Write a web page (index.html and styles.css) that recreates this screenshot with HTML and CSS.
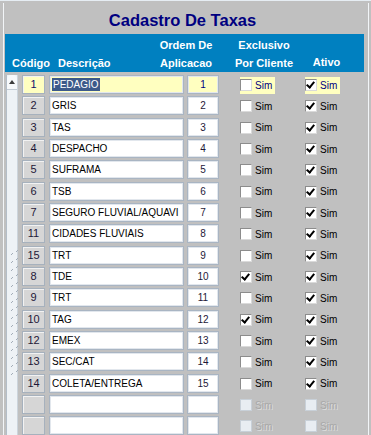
FILE: index.html
```html
<!DOCTYPE html>
<html>
<head>
  <meta charset="utf-8">
  <title>Cadastro De Taxas</title>
  <link rel="stylesheet" href="styles.css">
</head>
<body>
  <div class="frame">
    <div class="panel">
      <h1 class="title">Cadastro De Taxas</h1>

      <div class="head">
        <span class="h-cod">Código</span>
        <span class="h-desc">Descrição</span>
        <span class="h-ord">Ordem De<br>Aplicacao</span>
        <span class="h-exc">Exclusivo<br>Por Cliente</span>
        <span class="h-ativo">Ativo</span>
      </div>

      <div class="grid">
        <div class="scroll">
          <div class="scroll-btn"><i class="arrow"></i></div>
          <div class="grip">
            <svg width="12" height="130">
              <defs>
                <pattern id="dots" width="12" height="8" patternUnits="userSpaceOnUse">
                  <rect x="4" y="6" width="1" height="1" fill="#a3adb8"/>
                  <rect x="5" y="5" width="1" height="1" fill="#a3adb8"/>
                  <rect x="9" y="3" width="1" height="1" fill="#a3adb8"/>
                  <rect x="10" y="2" width="1" height="1" fill="#a3adb8"/>
                </pattern>
              </defs>
              <rect width="12" height="130" fill="url(#dots)"/>
            </svg>
          </div>
        </div>

        <div class="rows">
          <div class="row sel">
            <span class="cod">1</span>
            <span class="desc"><b class="hl">PEDAGIO</b></span>
            <span class="ord">1</span>
            <span class="c1"><span class="chk"><i class="box"></i>Sim</span></span>
            <span class="c2"><span class="chk"><i class="box on"></i>Sim</span></span>
          </div>
          <div class="row">
            <span class="cod">2</span><span class="desc">GRIS</span><span class="ord">2</span>
            <span class="c1"><span class="chk"><i class="box"></i>Sim</span></span>
            <span class="c2"><span class="chk"><i class="box on"></i>Sim</span></span>
          </div>
          <div class="row">
            <span class="cod">3</span><span class="desc">TAS</span><span class="ord">3</span>
            <span class="c1"><span class="chk"><i class="box"></i>Sim</span></span>
            <span class="c2"><span class="chk"><i class="box on"></i>Sim</span></span>
          </div>
          <div class="row">
            <span class="cod">4</span><span class="desc">DESPACHO</span><span class="ord">4</span>
            <span class="c1"><span class="chk"><i class="box"></i>Sim</span></span>
            <span class="c2"><span class="chk"><i class="box on"></i>Sim</span></span>
          </div>
          <div class="row">
            <span class="cod">5</span><span class="desc">SUFRAMA</span><span class="ord">5</span>
            <span class="c1"><span class="chk"><i class="box"></i>Sim</span></span>
            <span class="c2"><span class="chk"><i class="box on"></i>Sim</span></span>
          </div>
          <div class="row">
            <span class="cod">6</span><span class="desc">TSB</span><span class="ord">6</span>
            <span class="c1"><span class="chk"><i class="box"></i>Sim</span></span>
            <span class="c2"><span class="chk"><i class="box on"></i>Sim</span></span>
          </div>
          <div class="row">
            <span class="cod">7</span><span class="desc">SEGURO FLUVIAL/AQUAVI</span><span class="ord">7</span>
            <span class="c1"><span class="chk"><i class="box"></i>Sim</span></span>
            <span class="c2"><span class="chk"><i class="box on"></i>Sim</span></span>
          </div>
          <div class="row">
            <span class="cod">11</span><span class="desc">CIDADES FLUVIAIS</span><span class="ord">8</span>
            <span class="c1"><span class="chk"><i class="box"></i>Sim</span></span>
            <span class="c2"><span class="chk"><i class="box on"></i>Sim</span></span>
          </div>
          <div class="row">
            <span class="cod">15</span><span class="desc">TRT</span><span class="ord">9</span>
            <span class="c1"><span class="chk"><i class="box"></i>Sim</span></span>
            <span class="c2"><span class="chk"><i class="box on"></i>Sim</span></span>
          </div>
          <div class="row">
            <span class="cod">8</span><span class="desc">TDE</span><span class="ord">10</span>
            <span class="c1"><span class="chk"><i class="box on"></i>Sim</span></span>
            <span class="c2"><span class="chk"><i class="box on"></i>Sim</span></span>
          </div>
          <div class="row">
            <span class="cod">9</span><span class="desc">TRT</span><span class="ord">11</span>
            <span class="c1"><span class="chk"><i class="box"></i>Sim</span></span>
            <span class="c2"><span class="chk"><i class="box on"></i>Sim</span></span>
          </div>
          <div class="row">
            <span class="cod">10</span><span class="desc">TAG</span><span class="ord">12</span>
            <span class="c1"><span class="chk"><i class="box on"></i>Sim</span></span>
            <span class="c2"><span class="chk"><i class="box on"></i>Sim</span></span>
          </div>
          <div class="row">
            <span class="cod">12</span><span class="desc">EMEX</span><span class="ord">13</span>
            <span class="c1"><span class="chk"><i class="box"></i>Sim</span></span>
            <span class="c2"><span class="chk"><i class="box on"></i>Sim</span></span>
          </div>
          <div class="row">
            <span class="cod">13</span><span class="desc">SEC/CAT</span><span class="ord">14</span>
            <span class="c1"><span class="chk"><i class="box"></i>Sim</span></span>
            <span class="c2"><span class="chk"><i class="box on"></i>Sim</span></span>
          </div>
          <div class="row">
            <span class="cod">14</span><span class="desc">COLETA/ENTREGA</span><span class="ord">15</span>
            <span class="c1"><span class="chk"><i class="box"></i>Sim</span></span>
            <span class="c2"><span class="chk"><i class="box on"></i>Sim</span></span>
          </div>
          <div class="row off">
            <span class="cod"></span><span class="desc"></span><span class="ord"></span>
            <span class="c1"><span class="chk"><i class="box"></i>Sim</span></span>
            <span class="c2"><span class="chk"><i class="box"></i>Sim</span></span>
          </div>
          <div class="row off">
            <span class="cod"></span><span class="desc"></span><span class="ord"></span>
            <span class="c1"><span class="chk"><i class="box"></i>Sim</span></span>
            <span class="c2"><span class="chk"><i class="box"></i>Sim</span></span>
          </div>
        </div>
      </div>
    </div>
  </div>
</body>
</html>
```

FILE: styles.css
```css
html, body {
  margin: 0;
  padding: 0;
  height: 100%;
  overflow: hidden;
  background: #c0c0c0;
  font-family: "Liberation Sans", Arial, sans-serif;
}
.frame {
  border-top: 1px solid #e6edf3;
  padding: 2px 2px 0 3px;
  height: 100%;
  box-sizing: border-box;
}
.panel {
  border-left: 1px solid #f2f5f8;
  border-right: 1px solid #f2f5f8;
  padding-left: 1px;
  height: 100%;
  box-sizing: border-box;
}
.title {
  margin: 0;
  padding: 3px 8px 0 0;
  height: 31px;
  box-sizing: border-box;
  line-height: 28px;
  font-size: 16.5px;
  font-weight: bold;
  color: #000080;
  text-align: center;
}

/* header bar */
.head {
  margin-right: 4px;
  height: 38px;
  background: #0080c0;
  color: #fff;
  font-size: 11px;
  font-weight: bold;
  line-height: 18px;
  padding-top: 2px;
  box-sizing: border-box;
  display: grid;
  grid-template-columns: 50px 97px 68px 88px 37px 1fr;
  align-items: end;
}
.h-cod { padding-left: 7px; }
.h-desc { padding-left: 3px; }
.h-ord, .h-exc, .h-ativo { text-align: center; }
.h-ativo { padding-bottom: 1px; }

/* grid body */
.grid {
  display: flex;
  padding: 3px 0 0 1px;
}
.scroll {
  width: 12px;
  height: 360px;
  box-sizing: border-box;
  background: #eef2f6;
  border-left: 1px solid #b3bdc8;
  border-right: 1px solid #ccd4dc;
  margin-right: 4px;
}
.scroll-btn {
  height: 15px;
  border-bottom: 1px solid #c3ccd5;
  border-radius: 4px 4px 0 0;
  background: #f7f9fb;
  display: flex;
  justify-content: center;
  padding-top: 5px;
  box-sizing: border-box;
}
.arrow {
  width: 0;
  height: 0;
  border-left: 3px solid transparent;
  border-right: 3px solid transparent;
  border-bottom: 4px solid #3c3c3c;
}
.grip {
  margin-top: 158px;
  height: 130px;
}
.grip svg { display: block; }

.rows {
  display: flex;
  flex-direction: column;
  gap: 2.33px;
}
.row {
  display: flex;
  align-items: center;
  height: 19px;
}
.cod, .desc, .ord {
  height: 19px;
  box-sizing: border-box;
  line-height: 17px;
  white-space: nowrap;
  overflow: hidden;
}
.cod {
  width: 23px;
  border: 1px solid #a6b1bd;
  background: #d6d6d6;
  box-shadow: inset 1px 1px #f2f2f2;
  text-align: center;
  font-size: 11px;
  color: #1e1838;
}
.desc {
  margin-left: 4px;
  width: 135px;
  border: 1px solid #a9b5c3;
  box-shadow: inset 0 0 0 1px #e2e7ed;
  background: #fff;
  font-size: 10px;
  padding-left: 2px;
  color: #000;
}
.ord {
  margin-left: 3px;
  width: 32px;
  border: 1px solid #a9b5c3;
  box-shadow: inset 0 0 0 1px #e2e7ed;
  background: #fff;
  text-align: center;
  font-size: 10px;
  color: #1e1838;
}
.c1 {
  margin-left: 21px;
  width: 65px;
}
.chk {
  display: inline-flex;
  align-items: center;
  gap: 3px;
  height: 17px;
  padding-right: 3px;
  font-size: 10px;
  color: #000;
  vertical-align: middle;
}
.box {
  width: 12px;
  height: 12px;
  box-sizing: border-box;
  border: 1px solid;
  border-color: #8c8c8c #dadada #dadada #8c8c8c;
  background: #fff;
  position: relative;
}
.box.on::after {
  content: "";
  position: absolute;
  left: 2px;
  top: 0px;
  width: 3px;
  height: 6px;
  border: solid #000;
  border-width: 0 2px 2px 0;
  transform: rotate(40deg);
}

/* selected row */
.sel .cod, .sel .desc, .sel .ord { background: #ffffc0; }
.sel .cod { color: #10106a; }
.sel .ord { color: #000080; }
.sel .chk { background: #ffffc0; color: #000080; }
.hl {
  font-weight: normal;
  background: #3c5a8a;
  color: #fff;
  padding: 1px 1px;
}

/* empty rows */
.off .chk {
  color: #a8a8a8;
  text-shadow: 1px 1px #dcdcdc;
}
.off .box {
  background: #e8edf2;
  border-color: #c8d0d8;
}
```
